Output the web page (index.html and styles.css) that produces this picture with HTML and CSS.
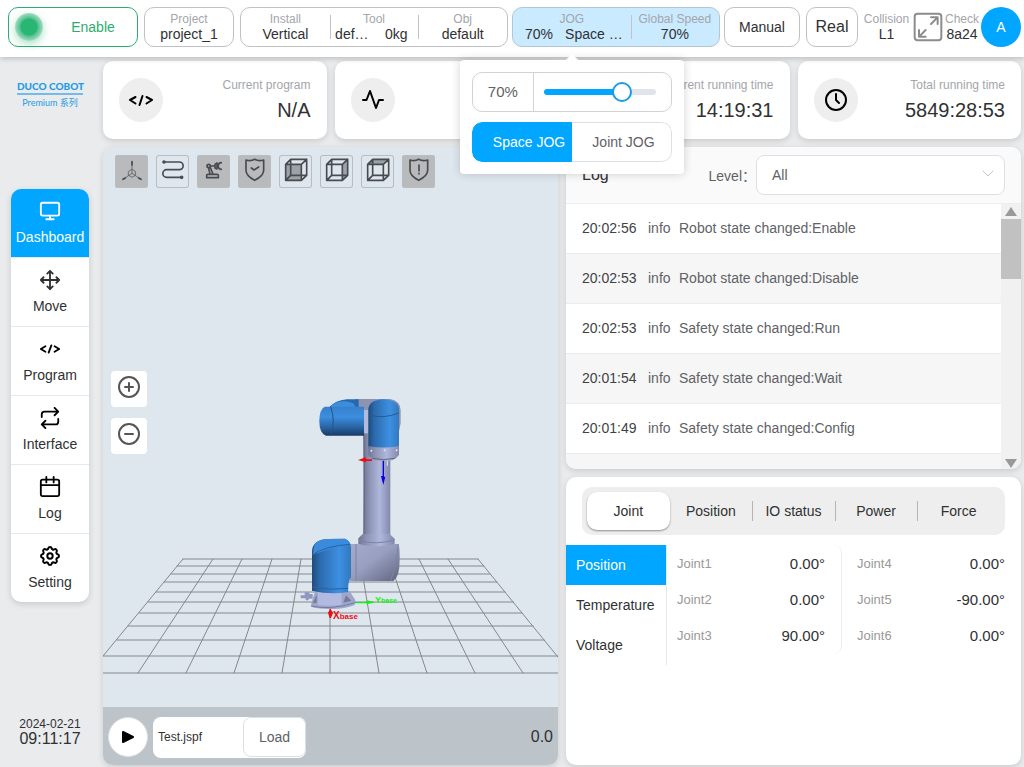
FILE: index.html
```html
<!DOCTYPE html>
<html lang="en">
<head>
    <meta charset="UTF-8">
    <meta name="viewport" content="width=device-width, initial-scale=1.0">
    <title>Duco Cobot</title>
    <link rel="stylesheet" href="styles.css">
</head>
<body>
    <header class="topbar">
        <button class="box enable" type="button"><span class="lamp"></span><span class="enable-text">Enable</span></button>
        <button class="box project" type="button"><small>Project</small><b>project_1</b></button>
        <div class="box setup">
            <div class="cell"><small>Install</small><b>Vertical</b></div>
            <div class="cell"><small>Tool</small><b class="pair"><span>def…</span><span>0kg</span></b></div>
            <div class="cell"><small>Obj</small><b>default</b></div>
        </div>
        <div class="box speed">
            <div class="cell jog">
                <small>JOG</small><b class="jog-value"><span>70%</span><span>Space …</span></b>
                <div class="popover">
                    <div class="slider-box">
                        <label class="percent" for="jog_speed">70%</label>
                        <div class="track"><input type="range" id="jog_speed" min="0" max="100" value="70"></div>
                    </div>
                    <div class="switch">
                        <button class="active" type="button">Space JOG</button>
                        <button type="button">Joint JOG</button>
                    </div>
                </div>
            </div>
            <div class="cell global"><small>Global Speed</small><b>70%</b></div>
        </div>
        <button class="box manual" type="button">Manual</button>
        <button class="box real" type="button">Real</button>
        <div class="right">
            <div class="info collision"><small>Collision</small><b>L1</b></div>
            <button class="full" type="button" aria-label="Full screen">
                <svg viewBox="0 0 90 90">
                    <rect x="5" y="5" width="80" height="80" rx="9"/>
                    <path d="M54 36L73 17M54 16H74V36M38 54L19 73M18 54V74H38"/>
                </svg>
            </button>
            <div class="info"><small>Check</small><b>8a24</b></div>
            <button class="avatar" type="button">A</button>
        </div>
    </header>

    <div class="layout">
        <aside class="sidebar">
            <div class="logo">
                <div class="logo-name">DUCO COBOT</div>
                <div class="logo-sub">Premium 系列</div>
            </div>
            <nav class="menu">
                <a href="#" class="active">
                    <svg viewBox="0 0 24 24"><rect x="2" y="3" width="20" height="14" rx="2"/><path d="M8 21h8M12 17v4"/></svg>
                    Dashboard
                </a>
                <a href="#">
                    <svg class="gray" viewBox="0 0 24 24"><path d="M5 9l-3 3 3 3M9 5l3-3 3 3M15 19l-3 3-3-3M19 9l3 3-3 3M2 12h20M12 2v20"/></svg>
                    Move
                </a>
                <a href="#">
                    <svg viewBox="0 0 24 24"><path d="M7 9L2 12l5 3M17 9L22 12l-5 3M13.500 8l-3 8"/></svg>
                    Program
                </a>
                <a href="#">
                    <svg viewBox="0 0 24 24"><path d="M17 1l4 4-4 4M3 11V8a3 3 0 0 1 3-3h15M7 23l-4-4 4-4M21 13v3a3 3 0 0 1-3 3H3"/></svg>
                    Interface
                </a>
                <a href="#">
                    <svg viewBox="0 0 24 24"><rect x="2" y="4" width="20" height="18" rx="2"/><path d="M16 1v6M8 1v6M2 10h20"/></svg>
                    Log
                </a>
                <a href="#">
                    <svg viewBox="1 1 22 22"><path d="M10.325 4.317c.426-1.756 2.924-1.756 3.350 0a1.724 1.724 0 002.573 1.066c1.543-.94 3.310.826 2.370 2.370a1.724 1.724 0 001.065 2.572c1.756.426 1.756 2.924 0 3.350a1.724 1.724 0 00-1.066 2.573c.94 1.543-.826 3.310-2.370 2.370a1.724 1.724 0 00-2.572 1.065c-.426 1.756-2.924 1.756-3.350 0a1.724 1.724 0 00-2.573-1.066c-1.543.94-3.310-.826-2.370-2.370a1.724 1.724 0 00-1.065-2.572c-1.756-.426-1.756-2.924 0-3.350a1.724 1.724 0 001.066-2.573c-.94-1.543.826-3.310 2.370-2.370.996.608 2.296.070 2.572-1.065z"/><circle cx="12" cy="12" r="2.700"/></svg>
                    Setting
                </a>
            </nav>
            <div class="clock"><span>2024-02-21</span><strong>09:11:17</strong></div>
        </aside>

        <main class="main">
            <section class="cards">
                <div class="card">
                    <span class="round"><svg class="code" viewBox="0 0 26 24"><path d="M7.500 9L2 12l5.500 3.500M18.500 9l5.500 3-5.500 3.500M14.500 8l-3 9"/></svg></span>
                    <div class="card-text"><small>Current program</small><b>N/A</b></div>
                </div>
                <div class="card">
                    <span class="round"><svg viewBox="0 0 24 24"><path d="M2 12h3.500l3.500-9 6 17 3-8h4"/></svg></span>
                </div>
                <div class="card">
                    <span class="round"><svg viewBox="0 0 24 24"><circle cx="12" cy="12" r="10"/><path d="M12 6v6l3 3"/></svg></span>
                    <div class="card-text"><small>Current running time</small><b>14:19:31</b></div>
                </div>
                <div class="card">
                    <span class="round"><svg viewBox="0 0 24 24"><circle cx="12" cy="12" r="10"/><path d="M12 6v6l3 3"/></svg></span>
                    <div class="card-text"><small>Total running time</small><b>5849:28:53</b></div>
                </div>
            </section>

            <section class="viewer">
                <div class="stage">
                    <svg class="scene" viewBox="103 147 455 560" preserveAspectRatio="xMidYMax slice">
                        <defs>
                            <linearGradient id="tube" x1="0" x2="1" y1="0" y2="0">
                                <stop offset="0" stop-color="#6f7593"/><stop offset=".25" stop-color="#8f96b8"/><stop offset=".6" stop-color="#afb7dc"/><stop offset="1" stop-color="#8289ac"/>
                            </linearGradient>
                            <linearGradient id="blueX" x1="0" x2="1" y1="0" y2="0">
                                <stop offset="0" stop-color="#1f4a7a"/><stop offset=".2" stop-color="#2c6aad"/><stop offset=".7" stop-color="#3d90e2"/><stop offset="1" stop-color="#3278bf"/>
                            </linearGradient>
                            <linearGradient id="blueY" x1="0" x2="0" y1="0" y2="1">
                                <stop offset="0" stop-color="#3680cc"/><stop offset=".35" stop-color="#3c8edf"/><stop offset=".7" stop-color="#2a65a5"/><stop offset="1" stop-color="#1a3965"/>
                            </linearGradient>
                            <linearGradient id="elbow" x1="0" x2="1" y1="0" y2="1">
                                <stop offset="0" stop-color="#a3aacc"/><stop offset=".45" stop-color="#989fc0"/><stop offset="1" stop-color="#5f647f"/>
                            </linearGradient>
                        </defs>
                        <g class="floor">
                            <path d="M183 559H478M177 566H484M171 574H490M164 582H497M156 592H505M148 602H513M139 613H522M128 626H533M117 640H544M103 656H558M90 673H571"/>
                            <path d="M183 559L89 673M213 559L138 673M242 559L186 673M272 559L234 673M301 559L282 673M330 559V673M360 559L379 673M389 559L427 673M419 559L475 673M448 559L523 673M478 559L571 673"/>
                        </g>
                        <g transform="translate(290 380) scale(.3333)">
                            <path d="M195 57H300Q330 62 332 90V130L322 180H222V120L195 90Z" fill="#8d93b3"/>
                            <rect x="220" y="110" width="81" height="372" fill="url(#tube)"/>
                            <path class="seam" d="M222 160Q226 310 222 470" stroke="#656b87"/>
                            <path d="M112 88Q135 60 170 58H206V90Z" fill="#2869ad"/>
                            <path d="M122 78Q150 55 190 70L198 84H120Z" fill="#3c8edc"/>
                            <path d="M104 80H222V167H108Q88 160 88 124T104 80Z" fill="url(#blueY)"/>
                            <path class="seam" d="M122 80Q138 123 122 166" stroke="#245483"/>
                            <path d="M222 90H236V160H222Z" fill="#b4badb"/>
                            <path d="M235 202V88Q237 60 280 58 324 60 327 86V202Q280 210 235 202Z" fill="url(#blueX)"/>
                            <path class="seam" d="M237 105Q282 118 326 99" stroke="#235c96"/>
                            <path d="M235 198Q280 207 327 198V225Q321 235 311 236V240Q280 245 251 240V234Q235 232 235 222Z" fill="url(#tube)"/>
                            <path class="seam" d="M246 235Q280 243 315 235" stroke="#62677e"/>
                            <g fill="#dfe4ff"><circle cx="244" cy="212" r="3"/><circle cx="284" cy="211" r="3"/><circle cx="320" cy="211" r="3"/></g>
                            <path d="M278 242H282V290H286L280 315 273 288H278Z" fill="#0a00e8"/>
                            <path class="seam" d="M292 244V256" stroke="#e8ebff"/>
                            <path d="M204 240L228 232V238H246V243H228V247Z" fill="#f00b12"/>
                            <path d="M218 462H299L314 476V500H205V475Z" fill="url(#tube)"/>
                            <path d="M180 492H207Q258 505 314 492H325Q330 500 329 540 329 590 310 603H180Z" fill="url(#elbow)"/>
                            <path class="seam" d="M207 482Q260 496 313 480M325 494Q320 555 302 602M198 493V602" stroke="#7d83a3"/>
                            <path d="M32 646H44V637H58V642H68V656H56V661H47V655H32Z" fill="#8e97bf"/>
                            <path d="M64 668L76 632H178L196 660 194 675Q160 689 116 687 78 686 64 680Z" fill="#9ea6cb"/>
                            <path d="M68 670L80 644V668ZM160 668L168 646 184 662Z" fill="#737a9b"/>
                            <path d="M84 636H155V674Q118 680 84 674Z" fill="#b2bae2"/>
                            <path class="seam" d="M64 678Q120 692 196 668" stroke="#747b9e"/>
                            <path d="M66 632V515Q67 480 110 477L165 476Q181 484 183 500V592Q174 602 174 636 120 645 66 632Z" fill="url(#blueX)"/>
                            <path d="M72 500Q76 480 110 477L165 476Q178 482 181 492 130 502 68 524Z" fill="#3b8bdc"/>
                            <path class="seam" d="M67 524Q105 498 180 493M68 622Q120 632 174 625" stroke="#28629f"/>
                            <path d="M197 666H230V661L256 667 230 673V670H197Z" fill="#14ee14"/>
                            <path d="M119 686H123V690Q127 694 129 698L123 714H119L114 698 119 690Z" fill="#f00b12"/>
                        </g>
                        <text class="axis x-axis" x="333" y="619">X<tspan>base</tspan></text>
                        <text class="axis y-axis" x="375" y="603">Y<tspan>base</tspan></text>
                    </svg>
                    <div class="tools">
                        <button class="on" type="button" aria-label="Axes"><svg viewBox="0 0 99 99"><path class="thin" d="M51 20V55L24 73M51 55L78 73M41 49L51 43 61 49V61L51 67 41 61Z"/><path d="M51 20V30M24 73L31 69M78 73L71 69"/></svg></button>
                        <button type="button" aria-label="Path"><svg viewBox="0 0 99 99"><path d="M24 21H70A11 11 0 0 1 70 44H32A11 11 0 0 0 32 67H77"/><circle cx="24" cy="21" r="3"/><circle cx="77" cy="67" r="3"/></svg></button>
                        <button class="on" type="button" aria-label="Robot"><svg viewBox="0 0 99 99"><path d="M29 68V61Q29 58 33 58H60Q64 58 64 61V68ZM35 40L39 57M40 38L48 57M41 33H54M54 28L60 24V42L54 39ZM73 23Q64 23 64 32H60M60 36H64Q66 43 73 43"/><circle cx="35" cy="33" r="5"/></svg></button>
                        <button class="on" type="button" aria-label="Safety"><svg viewBox="0 0 99 99"><path d="M24 15Q38 20 50 13 62 20 77 15V46Q77 63 50 76 24 63 24 46ZM40 39L48 45 62 36"/></svg></button>
                        <button type="button" aria-label="Front view"><svg viewBox="0 0 99 99"><path class="face" d="M20 28H67V76H20Z"/><path d="M20 28H67V76H20ZM20 28L35 13H83V61L67 76M67 28L83 13M35 13V61H83M35 61L20 76"/></svg></button>
                        <button type="button" aria-label="Side view"><svg viewBox="0 0 99 99"><path class="face" d="M67 28L83 13V61L67 76Z"/><path d="M20 28H67V76H20ZM20 28L35 13H83V61L67 76M67 28L83 13M35 13V61H83M35 61L20 76"/></svg></button>
                        <button type="button" aria-label="Top view"><svg viewBox="0 0 99 99"><path class="face" d="M20 28L35 13H83L67 28Z"/><path d="M20 28H67V76H20ZM20 28L35 13H83V61L67 76M67 28L83 13M35 13V61H83M35 61L20 76"/></svg></button>
                        <button class="on" type="button" aria-label="Warning"><svg viewBox="0 0 99 99"><path d="M24 15Q38 20 50 13 62 20 77 15V46Q77 63 50 76 24 63 24 46ZM51 30V48M51 55V57"/></svg></button>
                    </div>
                    <div class="zoom">
                        <button type="button" aria-label="Zoom in"><svg viewBox="0 0 24 24"><circle cx="12" cy="12" r="10"/><path d="M12 8v8M8 12h8"/></svg></button>
                        <button type="button" aria-label="Zoom out"><svg viewBox="0 0 24 24"><circle cx="12" cy="12" r="10"/><path d="M8 12h8"/></svg></button>
                    </div>
                </div>
                <div class="player">
                    <button class="play" type="button" aria-label="Play"><svg viewBox="0 0 12 12"><path d="M1 1L11 6 1 11Z"/></svg></button>
                    <div class="file"><span>Test.jspf</span><button type="button">Load</button></div>
                    <span class="time">0.0</span>
                </div>
            </section>

            <div class="column">
                <section class="log">
                    <div class="log-head">
                        <h2>Log</h2>
                        <label for="level">Level：</label>
                        <div class="select">
                            <select id="level"><option>All</option><option>info</option></select>
                            <svg viewBox="0 0 12 12"><path d="M1 3l5 5 5-5"/></svg>
                        </div>
                    </div>
                    <div class="log-body">
                        <div class="log-list">
                            <table>
                                <tr><td>20:02:56</td><td>info</td><td>Robot state changed:Enable</td></tr>
                                <tr><td>20:02:53</td><td>info</td><td>Robot state changed:Disable</td></tr>
                                <tr><td>20:02:53</td><td>info</td><td>Safety state changed:Run</td></tr>
                                <tr><td>20:01:54</td><td>info</td><td>Safety state changed:Wait</td></tr>
                                <tr><td>20:01:49</td><td>info</td><td>Safety state changed:Config</td></tr>
                                <tr><td></td><td></td><td></td></tr>
                            </table>
                        </div>
                        <div class="bar">
                            <svg viewBox="0 0 12 10"><path d="M6 0L12 9H0Z"/></svg>
                            <div class="thumb"></div>
                            <svg viewBox="0 0 12 10"><path d="M6 10L12 1H0Z"/></svg>
                        </div>
                    </div>
                </section>

                <section class="state">
                    <div class="tabs">
                        <button class="active" type="button">Joint</button>
                        <button type="button">Position</button>
                        <button type="button">IO status</button>
                        <button type="button">Power</button>
                        <button type="button">Force</button>
                    </div>
                    <div class="state-body">
                        <div class="side">
                            <button class="active" type="button">Position</button>
                            <button type="button">Temperature</button>
                            <button type="button">Voltage</button>
                        </div>
                        <div class="joints first">
                            <table>
                                <tr><th>Joint1</th><td>0.00°</td></tr>
                                <tr><th>Joint2</th><td>0.00°</td></tr>
                                <tr><th>Joint3</th><td>90.00°</td></tr>
                            </table>
                        </div>
                        <div class="joints">
                            <table>
                                <tr><th>Joint4</th><td>0.00°</td></tr>
                                <tr><th>Joint5</th><td>-90.00°</td></tr>
                                <tr><th>Joint6</th><td>0.00°</td></tr>
                            </table>
                        </div>
                    </div>
                </section>
            </div>
        </main>
    </div>
</body>
</html>
```

FILE: styles.css
```css
*{
    margin: 0;
    padding: 0;
    box-sizing: border-box;
}
body{
    display: flex;
    flex-direction: column;
    height: 100vh;
    overflow: hidden;
    background-color: #e9ebed;
    color: #303133;
    font-family: "Liberation Sans", "Noto Sans CJK SC", sans-serif;
    font-size: 14px;
}
button{
    font: inherit;
    color: inherit;
    background: none;
    border: none;
    cursor: pointer;
}
a{
    color: inherit;
    text-decoration: none;
}
b, strong, th, h2{
    font-weight: normal;
}
small{
    font-size: 12px;
    line-height: 14px;
    color: #a3a6ab;
}
svg{
    display: block;
    fill: none;
    stroke: #000;
    stroke-width: 2;
    stroke-linecap: round;
    stroke-linejoin: round;
}

/* top bar */
.topbar{
    position: relative;
    z-index: 2;
    display: flex;
    gap: 4px;
    height: 57px;
    padding: 7px 3px 0 8px;
    background-color: #fff;
    box-shadow: 0 2px 5px rgba(0, 0, 0, 0.18);
}
.box{
    display: flex;
    height: 40px;
    border: 1px solid #bfc1c4;
    border-radius: 10px;
    align-items: center;
    justify-content: center;
    white-space: nowrap;
}
.box b, .info b{
    line-height: 16px;
}
.enable{
    flex: 1 1 130px;
    margin-right: 2px;
    padding: 0 6px;
    border-color: #2cad70;
    color: #2cad70;
}
.lamp{
    width: 28px;
    height: 28px;
    border-radius: 50%;
    background: radial-gradient(circle, #29b573 0 8px, #4fc28c 9px, #a5dcc2 14px);
    box-shadow: 0 3px 8px rgba(41, 181, 115, 0.4);
}
.enable-text{
    flex: 1;
    padding-left: 12px;
}
.project{
    flex: 1 1 90px;
    flex-direction: column;
    margin-right: 2px;
}
.setup{
    flex: 3 1 268px;
}
.speed{
    flex: 2 1 208px;
    background-color: #c9eaff;
    border-color: #b4c6d2;
}
.manual{
    flex: 1 1 76px;
}
.real{
    flex: 1 1 52px;
    margin-left: 2px;
    font-size: 16px;
}
.cell{
    position: relative;
    display: flex;
    flex: 1;
    flex-direction: column;
    align-items: center;
}
.cell + .cell::before{
    content: "";
    position: absolute;
    left: 0;
    top: 3px;
    height: 24px;
    border-left: 1px solid #bfc4c9;
}
.pair{
    display: flex;
    width: 100%;
    text-align: center;
}
.pair span{
    flex: 1;
}
.jog{
    flex: 4;
}
.global{
    flex: 3;
}
.jog-value{
    display: flex;
    gap: 12px;
    padding-left: 4px;
}
.right{
    display: flex;
    gap: 2px;
    align-items: center;
    height: 40px;
}
.info{
    display: flex;
    flex-direction: column;
    align-items: center;
}
.collision{
    width: 49px;
}
.full{
    width: 30px;
    height: 30px;
}
.full svg{
    stroke: #8c8c8c;
    stroke-width: 6;
}
.avatar{
    width: 40px;
    height: 40px;
    border-radius: 50%;
    background-color: #00a6ff;
    color: #fff;
}

/* jog popover */
.popover{
    position: absolute;
    top: calc(100% + 18px);
    left: 50%;
    display: flex;
    flex-direction: column;
    gap: 10px;
    width: 224px;
    padding: 12px;
    border-radius: 4px;
    background-color: #fff;
    box-shadow: 0 0 10px rgba(0, 0, 0, 0.18);
    transform: translateX(-50%);
}
.popover::before{
    content: "";
    position: absolute;
    top: -4px;
    left: 50%;
    width: 10px;
    height: 10px;
    margin-left: -5px;
    background-color: #fff;
    transform: rotate(45deg);
}
.slider-box, .switch{
    display: flex;
    align-items: center;
    height: 40px;
    border: 1px solid #d0d2d6;
    border-radius: 10px;
}
.percent{
    width: 61px;
    border-right: 1px solid #d0d2d6;
    line-height: 38px;
    text-align: center;
    font-size: 15px;
    color: #606266;
}
.track{
    display: flex;
    align-items: center;
    flex: 1;
    height: 6px;
    margin: 0 15px 0 10px;
    border-radius: 3px;
    background: linear-gradient(to right, #00a6ff 70%, #e0e4ec 70%);
}
.track input{
    flex: none;
    width: calc(100% + 20px);
    height: 20px;
    margin: 0 -10px;
    appearance: none;
    background: none;
}
.track input::-webkit-slider-thumb{
    appearance: none;
    width: 20px;
    height: 20px;
    border: 2px solid #1a9ce6;
    border-radius: 50%;
    background-color: #fff;
}
.switch{
    overflow: hidden;
    border: none;
}
.switch button{
    flex: 1;
    height: 40px;
    padding-left: 20px;
    border: 1px solid #dcdfe6;
    border-left: none;
    border-radius: 0 10px 10px 0;
    text-align: left;
    color: #606266;
}
.switch .active{
    border: 1px solid #00a6ff;
    border-radius: 10px 0 0 10px;
    background-color: #00a6ff;
    color: #fff;
}

/* sidebar */
.layout{
    display: flex;
    flex: 1;
    min-height: 0;
}
.sidebar{
    display: flex;
    flex: none;
    flex-direction: column;
    width: 103px;
    padding: 22px 14px 20px 11px;
}
.logo{
    height: 110px;
    text-align: center;
    color: #1d9be6;
}
.logo-name{
    margin: 0 6px;
    border-bottom: 2px solid #74bbe8;
    font: 900 10px/14px Lato, sans-serif;
    white-space: nowrap;
}
.logo-sub{
    font: 9px/16px Lato, "Noto Sans CJK SC", sans-serif;
}
.menu{
    border-radius: 10px;
    background-color: #fff;
    box-shadow: 0 2px 6px rgba(0, 0, 0, 0.15);
    overflow: hidden;
}
.menu a{
    display: flex;
    flex-direction: column;
    align-items: center;
    gap: 7px;
    height: 69px;
    padding-top: 11px;
    border-top: 1px solid #e6e8ea;
    line-height: 16px;
}
.menu a.active{
    height: 68px;
    border-top: none;
    background-color: #00a6ff;
    color: #fff;
}
.menu svg{
    width: 22px;
    height: 22px;
}
.menu .active svg{
    stroke: #fff;
}
.menu .gray{
    stroke: #303133;
}
.clock{
    display: flex;
    flex-direction: column;
    align-items: center;
    margin-top: auto;
    font-size: 12px;
    line-height: 14px;
}
.clock strong{
    font-size: 16px;
    line-height: 16px;
}

/* main area */
.main{
    display: grid;
    flex: 1;
    grid-template-columns: 1fr 1fr;
    grid-template-rows: auto 1fr;
    gap: 8px;
    min-width: 0;
    padding: 4px 3px 2px 0;
}
.cards{
    display: grid;
    grid-column: 1 / 3;
    grid-template-columns: repeat(4, 1fr);
    gap: 8px;
}
.card, .viewer, .log, .state{
    border-radius: 10px;
    background-color: #fff;
    box-shadow: 0 2px 6px rgba(0, 0, 0, 0.14);
}
.card{
    display: flex;
    align-items: center;
    justify-content: space-between;
    height: 78px;
    padding: 0 16px;
}
.round{
    display: flex;
    align-items: center;
    justify-content: center;
    width: 44px;
    height: 44px;
    border-radius: 50%;
    background-color: #eee;
}
.round svg{
    width: 24px;
    height: 24px;
}
.round .code{
    width: 26px;
}
.card-text{
    display: flex;
    flex-direction: column;
    gap: 6px;
    text-align: right;
}
.card-text b{
    font-size: 20px;
    line-height: 24px;
}

/* robot view */
.viewer{
    display: flex;
    flex-direction: column;
    min-height: 0;
    background-color: #dfe7ee;
    overflow: hidden;
}
.stage{
    position: relative;
    flex: 1;
    min-height: 0;
}
.scene{
    position: absolute;
    width: 100%;
    height: 100%;
    stroke: none;
}
.floor{
    stroke: #858889;
    stroke-width: 1;
}
.seam{
    fill: none;
    stroke-width: 3;
}
.axis{
    font-size: 10px;
    font-weight: bold;
}
.axis tspan{
    font-size: 8px;
}
.x-axis{
    fill: #f00b12;
}
.y-axis{
    font-size: 9px;
    fill: #14ee14;
}
.y-axis tspan{
    font-size: 7px;
}
.tools{
    position: relative;
    display: flex;
    gap: 8px;
    padding: 8px 12px;
}
.tools button{
    width: 33px;
    height: 33px;
    border-radius: 3px;
    box-shadow: inset 0 0 0 1px #b9bdc1;
}
.tools .on{
    background-color: #b9babb;
}
.tools svg{
    width: 33px;
    height: 33px;
    stroke: #484c50;
    stroke-width: 5;
}
.tools .thin{
    stroke-width: 2;
}
.tools .face{
    fill: #9da2a8;
    stroke: none;
}
.zoom{
    position: absolute;
    left: 8px;
    top: 40%;
    display: flex;
    flex-direction: column;
    gap: 11px;
}
.zoom button{
    display: flex;
    align-items: center;
    justify-content: center;
    width: 36px;
    height: 36px;
    border-radius: 4px;
    background-color: #fff;
}
.zoom svg{
    width: 24px;
    height: 24px;
    margin-bottom: 4px;
    stroke: #555;
}
.player{
    display: flex;
    align-items: center;
    gap: 5px;
    height: 58px;
    padding: 2px 5px 0;
    background-color: #bcc3c9;
}
.play{
    display: flex;
    align-items: center;
    justify-content: center;
    width: 40px;
    height: 40px;
    border: 1px solid #dcdfe6;
    border-radius: 50%;
    background-color: #fff;
}
.play svg{
    width: 12px;
    height: 12px;
    fill: #000;
}
.file{
    display: flex;
    align-items: center;
    justify-content: space-between;
    width: 153px;
    height: 41px;
    padding-left: 5px;
    border-radius: 8px;
    background-color: #fff;
    font-size: 12px;
}
.file button{
    width: 63px;
    height: 40px;
    border: 1px solid #dcdfe6;
    border-radius: 8px;
    font-size: 14px;
    color: #606266;
}
.time{
    margin-left: auto;
    font-size: 16px;
}

/* log */
.column{
    display: flex;
    flex-direction: column;
    gap: 8px;
    min-height: 0;
}
.log{
    display: flex;
    flex: 19 1 0;
    flex-direction: column;
    min-height: 0;
    overflow: hidden;
}
.log-head{
    display: flex;
    flex: none;
    align-items: center;
    height: 57px;
    padding: 0 16px;
    border-bottom: 1px solid #ebedee;
    background-color: #fafafa;
}
.log-head h2{
    flex: 1;
    font-size: 16px;
}
.log-head label{
    color: #606266;
}
.select{
    position: relative;
    width: 249px;
}
.select select{
    width: 100%;
    height: 40px;
    padding: 0 15px;
    appearance: none;
    border: 1px solid #dcdfe6;
    border-radius: 8px;
    background-color: #fff;
    font: inherit;
    color: #606266;
}
.select svg{
    position: absolute;
    right: 11px;
    top: 13px;
    width: 12px;
    height: 12px;
    stroke: #c0c4cc;
    stroke-width: 1;
}
.log-body{
    display: flex;
    flex: 1;
    min-height: 0;
}
.log-list{
    flex: 1;
    overflow: hidden;
}
.log table{
    width: 100%;
    border-collapse: separate;
    border-spacing: 0;
}
.log td{
    height: 50px;
    padding-bottom: 2px;
    border-bottom: 1px solid #ebeced;
    color: #606266;
}
.log tr:nth-child(even){
    background-color: #f6f6f6;
}
.log td:first-child{
    width: 82px;
    padding-left: 16px;
    color: #404246;
}
.log td:nth-child(2){
    width: 31px;
}
.bar{
    display: flex;
    flex-direction: column;
    align-items: center;
    width: 20px;
    padding: 3px 0 1px;
    background-color: #f1f1f1;
}
.bar svg{
    width: 12px;
    height: 10px;
    fill: #999;
    stroke: none;
}
.bar .thumb{
    width: 20px;
    height: 60px;
    margin: 2px 0 auto;
    background-color: #c1c1c1;
}

/* joint state */
.state{
    flex: 17 1 0;
    min-height: 0;
    overflow: hidden;
}
.tabs{
    display: flex;
    height: 48px;
    margin: 10px 16px;
    padding: 5px;
    border-radius: 10px;
    background-color: #eee;
}
.tabs button{
    position: relative;
    flex: 1 1 0;
    height: 38px;
    border-radius: 10px;
    white-space: nowrap;
}
.tabs .active{
    background-color: #fff;
    box-shadow: 0 1px 2px rgba(0, 0, 0, 0.4);
}
.tabs button:nth-child(n+3)::before{
    content: "";
    position: absolute;
    left: 0;
    top: 9px;
    height: 20px;
    border-left: 1px solid #b5b5b5;
}
.state-body{
    display: flex;
    align-items: flex-start;
}
.side{
    display: flex;
    flex-direction: column;
    width: 101px;
    border-right: 1px solid #e6e8ea;
}
.side button{
    height: 40px;
    padding-left: 10px;
    text-align: left;
}
.side .active{
    background-color: #00a6ff;
    color: #fff;
}
.joints{
    flex: 1;
    padding: 1px 16px 0 15px;
}
.joints.first{
    padding: 1px 16px 0 10px;
    border-right: 1px solid #ebeef0;
    border-radius: 8px;
}
.joints table{
    width: 100%;
    border-collapse: collapse;
}
.joints tr{
    height: 36px;
}
.joints th{
    text-align: left;
    font-size: 13px;
    color: #999;
}
.joints td{
    text-align: right;
    font-size: 15px;
}
```
